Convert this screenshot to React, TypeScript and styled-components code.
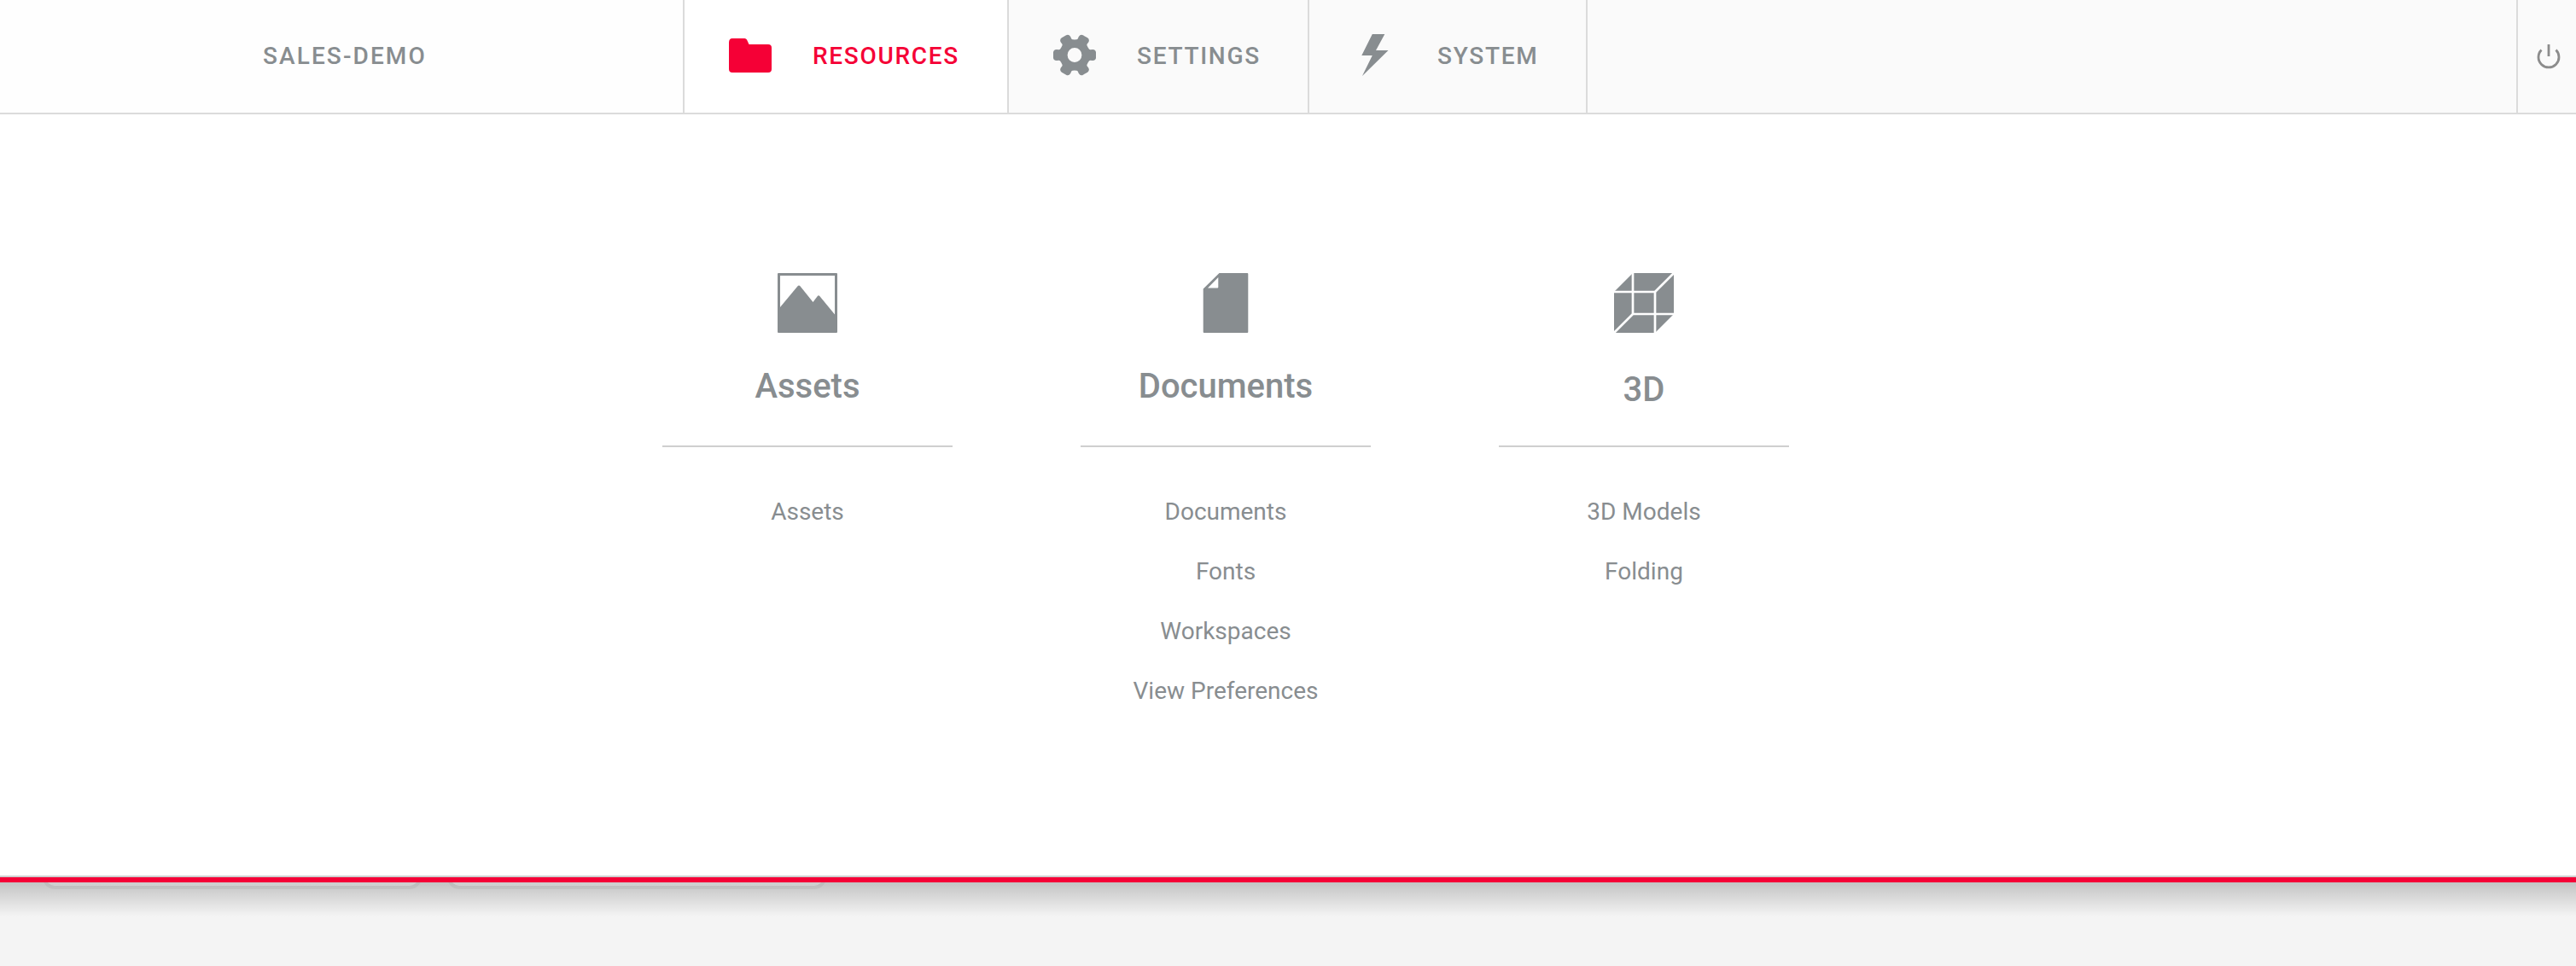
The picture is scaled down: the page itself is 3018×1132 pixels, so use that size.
import React from "react";
import styled, { createGlobalStyle } from "styled-components";

const GREY = "#888d90";
const RED = "#f50036";
const LINE = "#dbdbdb";

const GlobalStyle = createGlobalStyle`
  *, *::before, *::after { box-sizing: border-box; }
  body {
    margin: 0;
    background: #f4f4f4;
    font-family: Roboto, "Liberation Sans", sans-serif;
    color: ${GREY};
  }
`;

const Page = styled.div`
  position: relative;
  height: 1132px;
  overflow: hidden;
  display: flex;
  flex-direction: column;
`;

const Header = styled.header`
  flex: none;
  display: flex;
  height: 134px;
  background: #fafafa;
  border-bottom: 2px solid ${LINE};
  font-size: 28px;
  font-weight: 500;
`;

const Workspace = styled.div`
  flex: none;
  width: 802px;
  padding: 0 0 1px 308px;
  display: flex;
  align-items: center;
  background: #fefefe;
  border-right: 2px solid ${LINE};
  letter-spacing: 2.1px;
`;

const Nav = styled.nav`
  display: flex;
  flex: 1;
`;

const Tab = styled.a<{ $width: number; $active?: boolean }>`
  flex: none;
  width: ${(p) => p.$width}px;
  padding-left: 52px;
  display: flex;
  align-items: center;
  gap: 48px;
  border-right: 2px solid ${LINE};
  background: ${(p) => (p.$active ? "#ffffff" : "transparent")};
  color: ${(p) => (p.$active ? RED : GREY)};
  letter-spacing: 1.7px;

  svg { flex: none; display: block; overflow: visible; }
`;

const TabLabel = styled.span`
  padding-bottom: 1px;
`;

const PowerButton = styled.button`
  flex: none;
  width: 70px;
  padding: 2px 0 0 22px;
  display: flex;
  align-items: center;
  border: 0;
  border-left: 2px solid ${LINE};
  background: transparent;
`;

const Panel = styled.section`
  flex: none;
  height: 894px;
  padding: 186px 0 0 776px;
  display: flex;
  gap: 150px;
  background: #fff;
  border-bottom: 2px solid #cfcfcf;
`;

const Accent = styled.div`
  flex: none;
  height: 6px;
  background: ${RED};
`;

const Column = styled.div`
  width: 340px;
  display: flex;
  flex-direction: column;
  align-items: center;
`;

const ColumnHead = styled.div<{ $shift?: number }>`
  width: 100%;
  height: 204px;
  display: flex;
  flex-direction: column;
  align-items: center;
  gap: ${(p) => 39 + (p.$shift ?? 0)}px;
  border-bottom: 2px solid #cfcfcf;

  svg { flex: none; display: block; }
`;

const Title = styled.h2`
  margin: 0;
  font-size: 40px;
  line-height: 47px;
  font-weight: 500;
`;

const Links = styled.ul`
  list-style: none;
  margin: 40.5px 0 0;
  padding: 0;
  text-align: center;
  font-size: 28px;
  line-height: 70px;
`;

const Backdrop = styled.main`
  position: relative;
  flex: 1;
  overflow: hidden;
`;

const Cards = styled.div`
  display: flex;
  gap: 30px;
  padding-left: 50px;
  height: 8px;
  align-items: flex-end;
`;

const Card = styled.div`
  width: 444px;
  height: 60px;
  flex: none;
  border: 4px solid #e8e8e8;
  border-radius: 14px;
  background: #fff;
`;

const Shade = styled.div`
  position: absolute;
  inset: 0 0 auto 0;
  height: 40px;
  background: linear-gradient(rgba(0, 0, 0, 0.2), rgba(0, 0, 0, 0));
`;

const FolderIcon = () => (
  <svg width="50" height="50" viewBox="0 0 50 50" fill="currentColor">
    <path d="M4 4H18.5Q20 4 21 5.5L23.5 11H46Q50 11 50 15V40Q50 44 46 44H4Q0 44 0 40V9Q0 4 4 4Z" />
  </svg>
);

/* Outline of one tooth pointing right; the gear repeats it every 60 degrees. */
const TOOTH: [string, number[][]][] = [
  ["L", [[15.6, -9]]],
  ["L", [[16.9, -7]]],
  ["Q", [[17.4, -6.2], [18.8, -6.3]]],
  ["L", [[21, -6.6]]],
  ["Q", [[25, -6.3], [25, -3]]],
  ["L", [[25, 3]]],
  ["Q", [[25, 6.3], [21, 6.6]]],
  ["L", [[18.8, 6.3]]],
  ["Q", [[17.4, 6.2], [16.9, 7]]],
];

const gearOutline = [0, 60, 120, 180, 240, 300]
  .map((deg) => {
    const a = (deg * Math.PI) / 180;
    return TOOTH.map(
      ([cmd, pts]) =>
        cmd +
        pts
          .map(([x, y]) =>
            [x * Math.cos(a) - y * Math.sin(a), x * Math.sin(a) + y * Math.cos(a)]
              .map((n) => n.toFixed(2))
              .join(" ")
          )
          .join(" ")
    ).join("");
  })
  .join("")
  .replace("L", "M");

const GearIcon = () => (
  <svg width="50" height="50" viewBox="-25 -23.5 50 50" fill="currentColor">
    <path
      fillRule="evenodd"
      d={`${gearOutline}ZM0-8.4A8.4 8.4 0 1 0 0 8.4A8.4 8.4 0 1 0 0-8.4Z`}
    />
  </svg>
);

const BoltIcon = () => (
  <svg width="50" height="50" viewBox="0 0 50 50" fill="currentColor">
    <path d="M21.8-1H36.3L26 18H40.5L10 48L21.8 24H9.3Z" />
  </svg>
);

const PowerIcon = () => (
  <svg width="28" height="30" viewBox="0 0 28 30" fill="none" stroke="#8c8c8c" strokeWidth="2.8">
    <path d="M5.5 6.5A12 12 0 1 0 22.5 6.5" />
    <path d="M14 0V14" />
  </svg>
);

const ImageIcon = () => (
  <svg width="70" height="70" viewBox="0 0 70 70" fill={GREY}>
    <path
      fillRule="evenodd"
      d="M1 0H69Q70 0 70 1V69Q70 70 69 70H1Q0 70 0 69V1Q0 0 1 0ZM3 3V40L23.6 15.2Q25 13.8 26.4 15.2L41.5 34L46.8 27Q48 25.5 49.3 27L67 48.5V3Z"
    />
  </svg>
);

const DocumentIcon = () => (
  <svg width="70" height="70" viewBox="0 0 70 70" fill={GREY}>
    <path
      fillRule="evenodd"
      d="M27.5 0H60.3Q61.3 0 61.3 1V69Q61.3 70 60.3 70H9.7Q8.7 70 8.7 69V18.5ZM26.3 5L14 17.5H25.3Q26.3 17.5 26.3 16.5Z"
    />
  </svg>
);

const CubeIcon = () => (
  <svg width="70" height="70" viewBox="0 0 70 70">
    <path fill={GREY} d="M22 0H70V48L48 70H0V22Z" />
    <path fill="none" stroke="#fff" strokeWidth="2.7" d="M22 0V48H70M0 22H48V70M48 22L70 0M22 48L0 70" />
  </svg>
);

const columns = [
  { title: "Assets", icon: <ImageIcon />, links: ["Assets"] },
  {
    title: "Documents",
    icon: <DocumentIcon />,
    links: ["Documents", "Fonts", "Workspaces", "View Preferences"],
  },
  { title: "3D", icon: <CubeIcon />, shift: 4, links: ["3D Models", "Folding"] },
];

export default function App() {
  return (
    <Page>
      <GlobalStyle />
      <Header>
        <Workspace>SALES-DEMO</Workspace>
        <Nav>
          <Tab $width={380} $active><FolderIcon /><TabLabel>RESOURCES</TabLabel></Tab>
          <Tab $width={352}><GearIcon /><TabLabel>SETTINGS</TabLabel></Tab>
          <Tab $width={326}><BoltIcon /><TabLabel>SYSTEM</TabLabel></Tab>
        </Nav>
        <PowerButton aria-label="Log out"><PowerIcon /></PowerButton>
      </Header>
      <Panel>
        {columns.map((c) => (
          <Column key={c.title}>
            <ColumnHead $shift={c.shift}>
              {c.icon}
              <Title>{c.title}</Title>
            </ColumnHead>
            <Links>
              {c.links.map((l) => <li key={l}>{l}</li>)}
            </Links>
          </Column>
        ))}
      </Panel>
      <Accent />
      <Backdrop>
        <Cards><Card /><Card /></Cards>
        <Shade />
      </Backdrop>
    </Page>
  );
}
